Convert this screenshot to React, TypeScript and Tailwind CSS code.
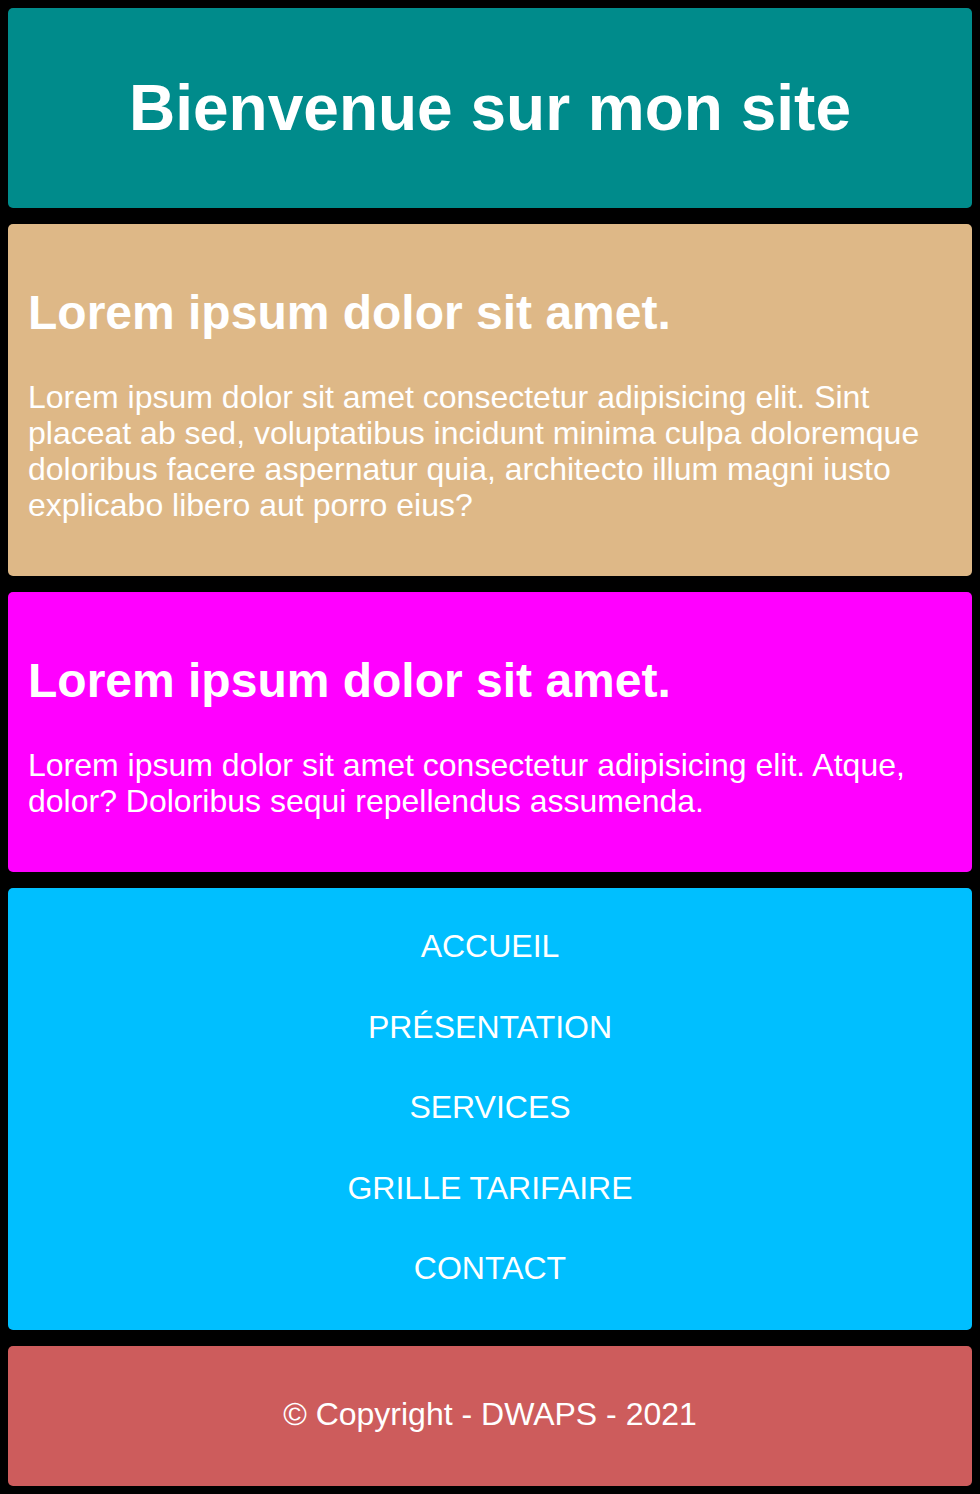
import React from "react";

export default function App() {
  const font = { fontFamily: '"Liberation Sans", Arial, Helvetica, sans-serif' };
  const nav = ["ACCUEIL", "PRÉSENTATION", "SERVICES", "GRILLE TARIFAIRE", "CONTACT"];
  return (
    <div className="bg-black p-2 flex flex-col gap-4 text-white font-['Liberation_Sans',Arial,sans-serif]" style={font}>
      <header className="bg-[#008b8b] rounded-[5px] h-[200px] flex items-center justify-center">
        <h1 className="text-[64px] leading-[74px] font-bold">Bienvenue sur mon site</h1>
      </header>

      <section className="bg-[#deb887] rounded-[5px] pt-[61px] pb-[53px] px-5">
        <h2 className="text-[48px] leading-[56px] font-bold">Lorem ipsum dolor sit amet.</h2>
        <p className="mt-[38px] text-[32px] leading-[36px]">
          Lorem ipsum dolor sit amet consectetur adipisicing elit. Sint placeat ab sed, voluptatibus incidunt minima culpa doloremque doloribus facere aspernatur quia, architecto illum magni iusto explicabo libero aut porro eius?
        </p>
      </section>

      <section className="bg-[#ff00ff] rounded-[5px] pt-[61px] pb-[53px] px-5">
        <h2 className="text-[48px] leading-[56px] font-bold">Lorem ipsum dolor sit amet.</h2>
        <p className="mt-[38px] text-[32px] leading-[36px]">
          Lorem ipsum dolor sit amet consectetur adipisicing elit. Atque, dolor? Doloribus sequi repellendus assumenda.
        </p>
      </section>

      <nav className="bg-[#00bfff] rounded-[5px] pt-10 pb-[43px]">
        <ul className="flex flex-col items-center gap-[43.5px]">
          {nav.map((n) => (
            <li key={n} className="text-[32px] leading-[37px]">
              {n}
            </li>
          ))}
        </ul>
      </nav>

      <footer className="bg-[#cd5c5c] rounded-[5px] pt-[50px] pb-[53px] text-center">
        <p className="text-[32px] leading-[37px]">© Copyright - DWAPS - 2021</p>
      </footer>
    </div>
  );
}
